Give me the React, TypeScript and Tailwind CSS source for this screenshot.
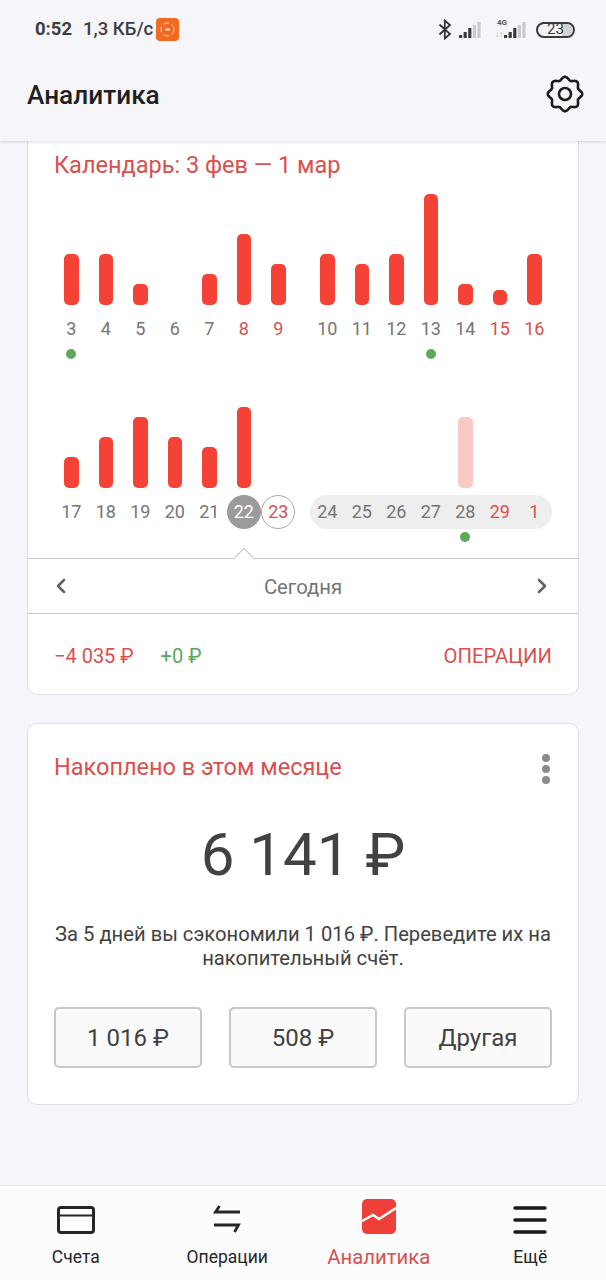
import React from "react";
import { ChevronLeft, ChevronRight } from "lucide-react";

type Day = { d: string; h: number; red?: boolean; dot?: boolean; pale?: boolean; today?: boolean; ring?: boolean };

const row1a: Day[] = [
  { d: "3", h: 51, dot: true },
  { d: "4", h: 51 },
  { d: "5", h: 21 },
  { d: "6", h: 0 },
  { d: "7", h: 31 },
  { d: "8", h: 71, red: true },
  { d: "9", h: 41, red: true },
];
const row1b: Day[] = [
  { d: "10", h: 51 },
  { d: "11", h: 41 },
  { d: "12", h: 51 },
  { d: "13", h: 111, dot: true },
  { d: "14", h: 21 },
  { d: "15", h: 15, red: true },
  { d: "16", h: 51, red: true },
];
const row2a: Day[] = [
  { d: "17", h: 31 },
  { d: "18", h: 51 },
  { d: "19", h: 71 },
  { d: "20", h: 51 },
  { d: "21", h: 41 },
  { d: "22", h: 81, today: true },
  { d: "23", h: 0, red: true, ring: true },
];
const row2b: Day[] = [
  { d: "24", h: 0 },
  { d: "25", h: 0 },
  { d: "26", h: 0 },
  { d: "27", h: 0 },
  { d: "28", h: 71, pale: true, dot: true },
  { d: "29", h: 0, red: true },
  { d: "1", h: 0, red: true },
];

function cogPath() {
  const pts: string[] = [];
  for (let i = 0; i < 160; i++) {
    const a = (i / 160) * Math.PI * 2;
    const r = 15.7 + 1.5 * Math.cos(8 * a);
    pts.push(`${(20 + r * Math.sin(a)).toFixed(2)} ${(20 - r * Math.cos(a)).toFixed(2)}`);
  }
  return "M" + pts.join(" L") + " Z";
}

function DayCell({ day, area }: { day: Day; area: number }) {
  return (
    <div className="flex flex-col items-center w-[34.5px]">
      <div className="flex items-end justify-center w-full" style={{ height: area }}>
        {day.h > 0 && (
          <div
            className={day.pale ? "w-[14.5px] rounded-[5px] bg-[#fbc9c3]" : "w-[14.5px] rounded-[5px] bg-[#f44336]"}
            style={{ height: day.h }}
          />
        )}
      </div>
      <div className="mt-[7px] h-[34px] w-full flex items-center justify-center relative">
        {day.today && <div className="absolute left-0 top-0 w-[34px] h-[34px] rounded-full bg-[#9b9b9b]" />}
        {day.ring && <div className="absolute left-0 top-0 w-[34px] h-[34px] rounded-full border border-[#a8a8a8]" />}
        <span
          className={
            "relative text-[18px] leading-none " +
            (day.today ? "text-white" : day.red ? "text-[#d9504e]" : "text-[#757575]")
          }
        >
          {day.d}
        </span>
      </div>
      <div className="h-[15px] flex items-center justify-center">
        {day.dot && <div className="w-[10px] h-[10px] rounded-full bg-[#5bab5b]" />}
      </div>
    </div>
  );
}

function Group({ days, area, pill }: { days: Day[]; area: number; pill?: boolean }) {
  return (
    <div className="relative flex items-start w-[241.5px]">
      {pill && <div className="absolute left-0 right-0 top-[120px] h-[34px] rounded-full bg-[#eeeeee]" />}
      {days.map((day) => (
        <div className="relative" key={day.d}>
          <DayCell day={day} area={area} />
        </div>
      ))}
    </div>
  );
}

function Signal() {
  const hs = [3, 6, 10, 13, 16];
  return (
    <svg width="23" height="18" viewBox="0 0 23 18" className="block">
      {hs.map((h, i) => (
        <rect key={i} x={i * 4.6} y={17 - h} width="3.2" height={h} rx="0.5" fill={i < 3 ? "#3a3a3a" : "#c9c9cf"} />
      ))}
    </svg>
  );
}

function StatusBar() {
  return (
    <div className="h-[60px] flex items-start pl-[35px] pr-[31px] pt-[18px] justify-between">
      <div className="flex items-center h-[23px]">
        <span className="text-[18.5px] font-bold text-[#3d3d3d] leading-none">0:52</span>
        <span className="ml-[11px] text-[18.5px] font-medium text-[#3d3d3d] leading-none">1,3 КБ/с</span>
        <div className="ml-[3px] w-[23px] h-[23px] rounded-[4px] bg-[#f26a21] flex items-center justify-center">
          <svg width="17" height="17" viewBox="0 0 17 17">
            <circle cx="8.5" cy="8.5" r="6.5" fill="none" stroke="#ffe3d0" strokeWidth="1" strokeDasharray="6 2.5" />
            <rect x="6" y="7.5" width="5" height="2" rx="0.6" fill="#ffe3d0" />
          </svg>
        </div>
      </div>
      <div className="flex items-center h-[23px]">
        <svg width="14" height="21" viewBox="0 0 14 21" fill="none" stroke="#333" strokeWidth="1.8">
          <path d="M1.5 5.5 L12 15 L6.8 19.5 V1.5 L12 6 L1.5 15.5" />
        </svg>
        <div className="ml-[7px]">
          <Signal />
        </div>
        <div className="ml-[13px] relative w-[32px] h-[23px]">
          <span className="absolute left-[2px] top-[1px] text-[8px] font-bold text-[#555] leading-none">4G</span>
          <span className="absolute left-0 top-[13px] text-[8px] text-[#aaa] leading-none">↓↑</span>
          <div className="absolute right-0 bottom-[2px]">
            <Signal />
          </div>
        </div>
        <div className="ml-[9px] relative w-[39px] h-[16px] rounded-full border-2 border-[#3a3a3a] overflow-hidden flex items-center justify-center">
          <div className="absolute right-0 top-0 bottom-0 w-[11px] bg-[#d2d2d6]" />
          <span className="relative text-[15px] text-[#3a3a3a] leading-none">23</span>
        </div>
      </div>
    </div>
  );
}

function Header() {
  return (
    <div className="relative z-10 h-[141px] shrink-0 bg-[#f5f5fa] shadow-[0_1px_3px_rgba(0,0,0,0.14)]">
      <StatusBar />
      <div className="h-[70px] flex items-center justify-between pl-[27px] pr-[21px]">
        <span className="text-[26.2px] font-medium text-[#1f1f1f] leading-none">Аналитика</span>
        <svg width="40" height="40" viewBox="0 0 40 40" fill="none" stroke="#1c1c1c" strokeWidth="2.6" className="mb-[3px]">
          <path d={cogPath()} strokeLinejoin="round" />
          <circle cx="20" cy="20" r="6" />
        </svg>
      </div>
    </div>
  );
}

function CalendarCard() {
  return (
    <div className="mx-[27px] bg-white border border-t-0 border-[#dfdfe9] rounded-b-[10px] h-[554px]">
      <div className="pl-[26px] pt-[10px] h-[34px] text-[23.5px] leading-[29px] text-[#d9504e]">Календарь: 3 фев — 1 мар</div>
      <div className="pl-[26px] flex gap-[14.5px] h-[191px]">
        <Group days={row1a} area={130} />
        <Group days={row1b} area={130} />
      </div>
      <div className="pl-[26px] flex gap-[14.5px] h-[183px] mt-[9px]">
        <Group days={row2a} area={113} />
        <Group days={row2b} area={113} pill />
      </div>
      <div className="relative h-[56px] border-t border-b border-[#c4c4cc] flex items-center justify-between pl-[21px] pr-[24px]">
        <div className="absolute left-[208px] top-[-8px] w-[16px] h-[16px] rotate-45 bg-white border-l border-t border-[#c4c4cc]" />
        <ChevronLeft size={24} strokeWidth={2.5} color="#616161" />
        <span className="ml-[3px] pt-[2px] text-[20.3px] text-[#757575] leading-none">Сегодня</span>
        <ChevronRight size={24} strokeWidth={2.5} color="#616161" />
      </div>
      <div className="h-[84px] flex items-center justify-between px-[26px] text-[20.3px] leading-none">
        <div className="flex gap-[27px] text-[20px]">
          <span className="text-[#d9504e]">−4 035 ₽</span>
          <span className="text-[#5aa75a]">+0 ₽</span>
        </div>
        <span className="text-[#d9504e]">ОПЕРАЦИИ</span>
      </div>
    </div>
  );
}

function SavingsCard() {
  return (
    <div className="mx-[27px] mt-[28px] bg-white border border-[#dfdfe9] rounded-[10px] h-[382px] px-[26px] flex flex-col">
      <div className="flex justify-between pt-[26px] h-[72px]">
        <span className="text-[23.5px] leading-[34px] text-[#d9504e]">Накоплено в этом месяце</span>
        <div className="flex flex-col gap-[3px] mr-[2px] pt-[4px]">
          <div className="w-[8px] h-[8px] rounded-full bg-[#8a8a8a]" />
          <div className="w-[8px] h-[8px] rounded-full bg-[#8a8a8a]" />
          <div className="w-[8px] h-[8px] rounded-full bg-[#8a8a8a]" />
        </div>
      </div>
      <div className="text-center text-[60px] leading-[72px] mt-[23px] text-[#424242]">6 141 ₽</div>
      <div className="text-center text-[20.2px] leading-[24px] mt-[31px] text-[#424242]">
        За 5 дней вы сэкономили 1 016 ₽. Переведите их на накопительный счёт.
      </div>
      <div className="flex justify-between mt-[37px]">
        {["1 016 ₽", "508 ₽", "Другая"].map((t) => (
          <div
            key={t}
            className="w-[148px] h-[61px] bg-[#fafafa] border-2 border-[#c8c8c8] rounded-[5px] flex items-center justify-center text-[24px] text-[#424242] leading-none"
          >
            {t}
          </div>
        ))}
      </div>
    </div>
  );
}

function NavItem({ label, active, children }: { label: string; active?: boolean; children: React.ReactNode }) {
  return (
    <div className="flex flex-col items-center">
      <div className="h-[48px] flex items-end justify-center">{children}</div>
      <span className={active ? "mt-[11px] text-[20.3px] leading-[24px] text-[#d9504e]" : "mt-[11px] text-[17.5px] leading-[24px] text-[#262626]"}>
        {label}
      </span>
    </div>
  );
}

function BottomNav() {
  return (
    <div className="h-[94px] shrink-0 bg-[#fcfcfc] grid grid-cols-4 shadow-[0_-1px_2px_rgba(0,0,0,0.06)]">
      <NavItem label="Счета">
        <svg width="38" height="28" viewBox="0 0 38 28" fill="none" stroke="#262626" strokeWidth="3">
          <rect x="1.5" y="1.5" width="35" height="25" rx="2.5" />
          <path d="M1.5 9.5 H36.5" strokeWidth="2" />
        </svg>
      </NavItem>
      <NavItem label="Операции">
        <svg width="28" height="28" viewBox="0 0 28 28" fill="none" stroke="#262626" strokeWidth="2.8" className="mb-[1px]">
          <path d="M27 7 H2.5 L6.5 1" />
          <path d="M1 20 H25.5 L21.5 27" />
        </svg>
      </NavItem>
      <NavItem label="Аналитика" active>
        <svg width="34" height="35" viewBox="0 0 34 35">
          <rect x="0" y="0" width="34" height="35" rx="5" fill="#ee4038" />
          <path d="M0 22 L11 16 L17 20 L34 9" fill="none" stroke="#ffffff" strokeWidth="2.4" />
        </svg>
      </NavItem>
      <NavItem label="Ещё">
        <svg width="34" height="28" viewBox="0 0 34 28" fill="none" stroke="#1a1a1a" strokeWidth="3.4" strokeLinecap="round">
          <path d="M2 2 H32 M2 14 H32 M2 26 H32" />
        </svg>
      </NavItem>
    </div>
  );
}

export default function App() {
  return (
    <div className="w-[606px] h-[1280px] bg-[#f5f5fa] flex flex-col overflow-hidden font-['Roboto',sans-serif]">
      <Header />
      <div className="flex-1 overflow-hidden">
        <CalendarCard />
        <SavingsCard />
      </div>
      <BottomNav />
    </div>
  );
}
